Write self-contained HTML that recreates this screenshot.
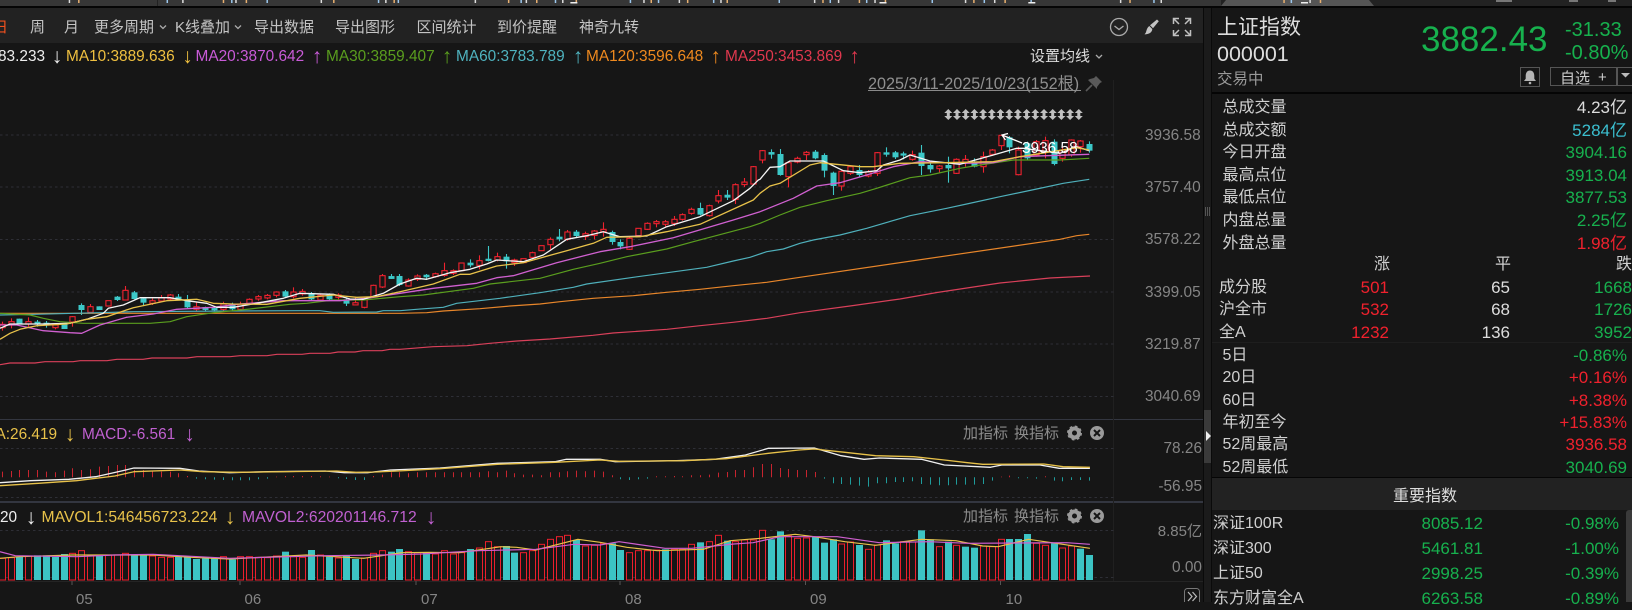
<!DOCTYPE html>
<html lang="zh-CN">
<head>
<meta charset="utf-8">
<title>上证指数</title>
<style>
html,body{margin:0;padding:0;background:#161616}
body{position:relative;width:1632px;height:602px;overflow:hidden;font-family:"Liberation Sans","Noto Sans CJK SC",sans-serif;color:#ccc}
.b{position:absolute}
.t{position:absolute;white-space:nowrap;line-height:20px;height:20px;margin-top:1px}
.tb{font-size:15px;color:#c4c4c4;top:17px}
.ma{font-size:15.4px;top:46px}
.ar{font-size:21px}
.ax{font-size:15.4px;color:#858585}
.ind{font-size:15px;color:#8c8c8c}
.lb{font-size:16px;color:#d0d0d0;left:1222.5px}
.v{font-size:17px;right:5px}
.n{font-size:16px;color:#d0d0d0}
.g{color:#17b14e}.r{color:#f0212d}
svg{position:absolute;left:0;top:0}
</style>
</head>
<body>
<!-- backgrounds -->
<div class="b" style="left:0;top:0;width:1632px;height:7px;background:#222"></div>
<div class="b" style="left:0;top:0;width:1221px;height:6px;background:#363636"></div>
<div class="b" style="left:0;top:6px;width:1632px;height:2px;background:#050505"></div>
<div class="b" style="left:0;top:8px;width:1203px;height:35px;background:#222"></div>
<div class="b" style="left:1203px;top:8px;width:9px;height:594px;background:#1b1b1b;border-left:1px solid #0a0a0a;border-right:1px solid #0a0a0a;box-sizing:border-box"></div>
<div class="b" style="left:1204px;top:410px;width:7px;height:53px;background:#3a3a3a"></div>
<div class="b" style="left:1212px;top:92px;width:420px;height:2px;background:#050505"></div>
<div class="b" style="left:1212px;top:342px;width:420px;height:1px;background:#1e1e1e"></div>
<div class="b" style="left:1212px;top:477px;width:420px;height:1px;background:#050505"></div>
<div class="b" style="left:1212px;top:478px;width:420px;height:32px;background:#222"></div>
<div class="b" style="left:1626px;top:510px;width:6px;height:92px;background:#3a3a3a;border-radius:3px 0 0 0"></div>
<div class="b" style="left:0;top:419px;width:1203px;height:1px;background:#333640"></div>
<div class="b" style="left:0;top:501px;width:1203px;height:2px;background:#333640"></div>
<div class="b" style="left:0;top:581px;width:1203px;height:1px;background:#242424"></div>
<div class="b" style="left:1113px;top:80px;width:1px;height:501px;background:#202020"></div>

<svg id="s" width="1632" height="602" viewBox="0 0 1632 602" xmlns="http://www.w3.org/2000/svg">
  <polygon points="1221,6 1226,0 1369,0 1374,6" fill="#555"/>
  <g id="marks"></g>
  <g stroke="#2e2f36" stroke-dasharray="2.5 3" stroke-width="1">
    <line x1="0" x2="1116" y1="135" y2="135"/><line x1="0" x2="1116" y1="187" y2="187"/>
    <line x1="0" x2="1116" y1="239.5" y2="239.5"/><line x1="0" x2="1116" y1="292" y2="292"/>
    <line x1="0" x2="1116" y1="344" y2="344"/><line x1="0" x2="1116" y1="396.5" y2="396.5"/>
    <line x1="0" x2="1116" y1="448.5" y2="448.5"/><line x1="0" x2="1116" y1="497.5" y2="497.5"/>
    <line x1="0" x2="1116" y1="530.5" y2="530.5"/><line x1="0" x2="1116" y1="577.5" y2="577.5"/>
  </g>
  <g stroke="#555" stroke-width="1">
    <line x1="72" x2="72" y1="581" y2="585"/><line x1="240" x2="240" y1="581" y2="585"/>
    <line x1="416" x2="416" y1="581" y2="585"/><line x1="620" x2="620" y1="581" y2="585"/>
    <line x1="805.5" x2="805.5" y1="581" y2="585"/><line x1="1000.5" x2="1000.5" y1="581" y2="585"/>
  </g>
  <g id="chart"></g>
  <!-- high arrow -->
  <g stroke="#fff" stroke-width="1.3" fill="none">
    <path d="M1002,135 L1022,143"/><path d="M1008,133.5 L1002,135 L1005.5,140"/>
  </g>
  <!-- toolbar chevrons -->
  <g fill="none" stroke="#aaa" stroke-width="1.3">
    <path d="M160,25.5 l3,3 l3,-3"/><path d="M235,25.5 l3,3 l3,-3"/><path d="M1096,55 l3,3 l3,-3"/>
    <circle cx="1119" cy="27" r="8.5" stroke="#aaa"/>
    <path d="M1114.5,26 l4.5,3.5 l4.5,-3.5" stroke="#aaa"/>
  </g>
  <!-- brush -->
  <path d="M1157,19.5 L1158.8,21.3 L1153,28.3 L1150,25.3Z" fill="#c4c4c4"/>
  <path d="M1149.3,26 L1152.3,29 C1152.3,33 1147.5,34.5 1144.5,34.3 C1147,32.5 1145.8,28.5 1149.3,26Z" fill="#c4c4c4"/>
  <!-- fullscreen -->
  <g fill="none" stroke="#c0c0c0" stroke-width="1.5">
    <path d="M1173.5,24 V18.5 H1179 M1174,19 L1179,24"/>
    <path d="M1190.5,24 V18.5 H1185 M1190,19 L1185,24"/>
    <path d="M1173.5,30 V35.5 H1179 M1174,35 L1179,30"/>
    <path d="M1190.5,30 V35.5 H1185 M1190,35 L1185,30"/>
  </g>
  <!-- pin -->
  <polygon points="1096,76 1102,82 1100,83 1097,87 1097,89 1088,80 1090,79 1094,78" fill="#5a5a5a"/>
  <path d="M1086,91 L1092,85" stroke="#5a5a5a" stroke-width="1.6"/>
  <line x1="868" x2="1081" y1="90.5" y2="90.5" stroke="#8a8a8a"/>
  <g id="da" fill="#c0c0c0"></g>
  <!-- gear + close -->
  <g id="ic"></g>
  <!-- right panel icons -->
  <rect x="1520.5" y="67.5" width="19" height="19" fill="none" stroke="#555"/>
  <path d="M1530,70.5 c-3.2,0 -4.3,2.8 -4.3,5.6 v2.6 l-1.7,2.3 h12 l-1.7,-2.3 v-2.6 c0,-2.8 -1.1,-5.6 -4.3,-5.6z" fill="#b5b5b5"/>
  <circle cx="1530" cy="83" r="1.3" fill="#b5b5b5"/>
  <rect x="1550.5" y="67.5" width="66" height="18" fill="none" stroke="#555"/>
  <rect x="1617.5" y="67.5" width="16" height="18" fill="none" stroke="#555"/>
  <polygon points="1621,73 1630,73 1625.5,77.5" fill="#bbb"/>
  <polygon points="1206,431 1206,441 1211,436" fill="#eee"/>
  <g fill="#555"><rect x="1205" y="207" width="1" height="9"/><rect x="1207" y="207" width="1" height="9"/><rect x="1209" y="207" width="1" height="9"/></g>
  <!-- >> -->
  <rect x="1184.5" y="588.5" width="15" height="20" rx="3" fill="#161616" stroke="#777"/>
  <path d="M1188,592 l4,4.5 l-4,4.5 M1192.5,592 l4,4.5 l-4,4.5" fill="none" stroke="#bbb" stroke-width="1.2"/>
</svg>

<!-- toolbar -->
<div class="t tb" style="left:-7px;color:#f0501e">日</div>
<div class="t tb" style="left:30px">周</div>
<div class="t tb" style="left:64px">月</div>
<div class="t tb" style="left:94px">更多周期</div>
<div class="t tb" style="left:175px">K线叠加</div>
<div class="t tb" style="left:254px">导出数据</div>
<div class="t tb" style="left:335px">导出图形</div>
<div class="t tb" style="left:416.5px">区间统计</div>
<div class="t tb" style="left:497px">到价提醒</div>
<div class="t tb" style="left:579px">神奇九转</div>

<!-- MA row -->
<div class="t ma" style="left:-2px;color:#eee">83.233</div>
<div class="t ma ar" style="left:51.75px;color:#eee">↓</div>
<div class="t ma" style="left:66px;color:#efc040">MA10:3889.636</div>
<div class="t ma ar" style="left:182.25px;color:#efc040">↓</div>
<div class="t ma" style="left:195.5px;color:#c95bd8">MA20:3870.642</div>
<div class="t ma ar" style="left:311.75px;color:#c95bd8">↑</div>
<div class="t ma" style="left:326px;color:#5a9e1e">MA30:3859.407</div>
<div class="t ma ar" style="left:441.75px;color:#5a9e1e">↑</div>
<div class="t ma" style="left:456px;color:#4fb3bf">MA60:3783.789</div>
<div class="t ma ar" style="left:572.75px;color:#4fb3bf">↑</div>
<div class="t ma" style="left:586px;color:#ef8a1f">MA120:3596.648</div>
<div class="t ma ar" style="left:710.35px;color:#ef8a1f">↑</div>
<div class="t ma" style="left:725px;color:#e0384e">MA250:3453.869</div>
<div class="t ma ar" style="left:849.25px;color:#e0384e">↑</div>
<div class="t" style="left:1030px;top:46px;font-size:15px;color:#ddd">设置均线</div>
<div class="t" style="left:868px;top:73px;font-size:16.2px;color:#8f8f8f">2025/3/11-2025/10/23(152根)</div>

<!-- axis -->
<div class="t ax" style="left:1145px;top:125px">3936.58</div>
<div class="t ax" style="left:1145px;top:177px">3757.40</div>
<div class="t ax" style="left:1145px;top:229px">3578.22</div>
<div class="t ax" style="left:1145px;top:282px">3399.05</div>
<div class="t ax" style="left:1145px;top:334px">3219.87</div>
<div class="t ax" style="left:1145px;top:386px">3040.69</div>
<div class="t ax" style="right:430px;top:438px">78.26</div>
<div class="t ax" style="right:430px;top:476px">-56.95</div>
<div class="t ax" style="right:430px;top:521px;font-size:15px">8.85亿</div>
<div class="t ax" style="right:430px;top:557px">0.00</div>
<div class="t" style="left:1022px;top:138px;font-size:15.4px;color:#fff">3936.58</div>

<!-- panel headers -->
<div class="t ma" style="left:-4.5px;top:424px;color:#e8c24a">A:26.419</div>
<div class="t ma ar" style="left:64.75px;top:424px;color:#e8c24a">↓</div>
<div class="t ma" style="left:82px;top:424px;color:#c060d0">MACD:-6.561</div>
<div class="t ma ar" style="left:184.25px;top:424px;color:#c060d0">↓</div>
<div class="t ind" style="left:963px;top:423px">加指标</div>
<div class="t ind" style="left:1014px;top:423px">换指标</div>
<div class="t ma" style="left:0;top:507px;color:#eee">20</div>
<div class="t ma ar" style="left:25.75px;top:507px;color:#eee">↓</div>
<div class="t ma" style="left:41.5px;top:507px;color:#e8c24a;font-size:15.7px">MAVOL1:546456723.224</div>
<div class="t ma ar" style="left:224.75px;top:507px;color:#e8c24a">↓</div>
<div class="t ma" style="left:242px;top:507px;color:#c060d0;font-size:15.7px">MAVOL2:620201146.712</div>
<div class="t ma ar" style="left:425.75px;top:507px;color:#c060d0">↓</div>
<div class="t ind" style="left:963px;top:506px">加指标</div>
<div class="t ind" style="left:1014px;top:506px">换指标</div>

<!-- x axis -->
<div class="t ax" style="left:76px;top:589px;font-size:15px">05</div>
<div class="t ax" style="left:244.5px;top:589px;font-size:15px">06</div>
<div class="t ax" style="left:421px;top:589px;font-size:15px">07</div>
<div class="t ax" style="left:625px;top:589px;font-size:15px">08</div>
<div class="t ax" style="left:810px;top:589px;font-size:15px">09</div>
<div class="t ax" style="left:1005.5px;top:589px;font-size:15px">10</div>

<!-- right panel head -->
<div class="t" style="left:1217px;top:17px;font-size:21px;color:#ddd">上证指数</div>
<div class="t" style="left:1217px;top:43px;font-size:21.5px;color:#ddd">000001</div>
<div class="t" style="left:1217px;top:69px;font-size:15.5px;color:#999">交易中</div>
<div class="t g" style="left:1421px;top:29px;font-size:35px;line-height:20px">3882.43</div>
<div class="t g" style="left:1565px;top:19px;font-size:20px">-31.33</div>
<div class="t g" style="left:1565px;top:42px;font-size:20px">-0.80%</div>
<div class="t" style="left:1560px;top:68px;font-size:15px;color:#ccc">自选</div>
<div class="t" style="left:1598px;top:67px;font-size:15px;color:#ccc">+</div>

<!-- stats -->
<div class="t lb" style="top:97px">总成交量</div><div class="t v" style="top:97px;color:#ddd">4.23亿</div>
<div class="t lb" style="top:120px">总成交额</div><div class="t v" style="top:120px;color:#3bbfd0">5284亿</div>
<div class="t lb" style="top:142px">今日开盘</div><div class="t v g" style="top:142px">3904.16</div>
<div class="t lb" style="top:165px">最高点位</div><div class="t v g" style="top:165px">3913.04</div>
<div class="t lb" style="top:187px">最低点位</div><div class="t v g" style="top:187px">3877.53</div>
<div class="t lb" style="top:210px">内盘总量</div><div class="t v g" style="top:210px">2.25亿</div>
<div class="t lb" style="top:233px">外盘总量</div><div class="t v r" style="top:233px">1.98亿</div>

<div class="t n" style="left:1374px;top:254px">涨</div>
<div class="t n" style="left:1495px;top:254px">平</div>
<div class="t n" style="left:1616px;top:254px">跌</div>

<div class="t n" style="left:1219px;top:277px">成分股</div>
<div class="t v r" style="right:243px;top:277px">501</div><div class="t v" style="right:122px;top:277px;color:#ddd">65</div><div class="t v g" style="right:0;top:277px">1668</div>
<div class="t n" style="left:1219px;top:299px">沪全市</div>
<div class="t v r" style="right:243px;top:299px">532</div><div class="t v" style="right:122px;top:299px;color:#ddd">68</div><div class="t v g" style="right:0;top:299px">1726</div>
<div class="t n" style="left:1219px;top:322px">全A</div>
<div class="t v r" style="right:243px;top:322px">1232</div><div class="t v" style="right:122px;top:322px;color:#ddd">136</div><div class="t v g" style="right:0;top:322px">3952</div>

<div class="t lb" style="top:345px">5日</div><div class="t v g" style="top:345px">-0.86%</div>
<div class="t lb" style="top:367px">20日</div><div class="t v r" style="top:367px">+0.16%</div>
<div class="t lb" style="top:390px">60日</div><div class="t v r" style="top:390px">+8.38%</div>
<div class="t lb" style="top:412px">年初至今</div><div class="t v r" style="top:412px">+15.83%</div>
<div class="t lb" style="top:434px">52周最高</div><div class="t v r" style="top:434px">3936.58</div>
<div class="t lb" style="top:457px">52周最低</div><div class="t v g" style="top:457px">3040.69</div>

<div class="t" style="left:1393px;top:486px;font-size:16px;color:#ddd">重要指数</div>

<div class="t n" style="left:1213px;top:513px">深证100R</div><div class="t v g" style="left:1421.5px;right:auto;top:513px">8085.12</div><div class="t v g" style="right:13px;top:513px">-0.98%</div>
<div class="t n" style="left:1213px;top:538px">深证300</div><div class="t v g" style="left:1421.5px;right:auto;top:538px">5461.81</div><div class="t v g" style="right:13px;top:538px">-1.00%</div>
<div class="t n" style="left:1213px;top:563px">上证50</div><div class="t v g" style="left:1421.5px;right:auto;top:563px">2998.25</div><div class="t v g" style="right:13px;top:563px">-0.39%</div>
<div class="t n" style="left:1213px;top:588px">东方财富全A</div><div class="t v g" style="left:1421.5px;right:auto;top:588px">6263.58</div><div class="t v g" style="right:13px;top:588px">-0.89%</div>

<script>
(function(){
var NS='http://www.w3.org/2000/svg';
function el(par,n,a){var e=document.createElementNS(NS,n);for(var k in a)e.setAttribute(k,a[k]);par.appendChild(e);return e;}
var ch=document.getElementById('chart');
function X(i){return 1089-(123-i)*8.84;}

/* top strip marks */
var mk=document.getElementById('marks');
[66,75,160,175,214,222,226,236,256,308,320,363,370,378,382,456,488,500,505,515,533,540,553,605,618,625,632,652,660,685,692,698,748,782,790,797,805,825,832,840,850,895,927,935,945,955,965,990,1076,1085,1108,1115,1233,1240,1258,1268].forEach(function(v,i){
  el(mk,'rect',{x:v*1.0408,y:0,width:1.5,height:3,fill:['#ddd','#e8b070','#9cc8ee'][i%3]});
});
[548,845,988,1250].forEach(function(v){el(mk,'rect',{x:v*1.0408,y:2,width:7,height:1.5,fill:'#eee'});});
el(mk,'rect',{x:157,y:0,width:1,height:6,fill:'#222'});
[[1496,16],[1569,9],[1608,8]].forEach(function(a){el(mk,'rect',{x:a[0],y:0,width:a[1],height:2,fill:'#777'});});

/* double arrows */
var da=document.getElementById('da');
for(var i=0;i<16;i++){var x=948.3+i*8.7;
  el(da,'path',{d:'M'+x+',109 l4,4 h-2.5 v3 h2.5 l-4,4 l-4,-4 h2.5 v-3 h-2.5z'});}

/* icons */
var ic=document.getElementById('ic');
[433,516].forEach(function(y){
  el(ic,'circle',{cx:1074.5,cy:y,r:4.5,fill:'none',stroke:'#9a9a9a','stroke-width':4});
  el(ic,'circle',{cx:1074.5,cy:y,r:6.6,fill:'none',stroke:'#9a9a9a','stroke-width':1.8,'stroke-dasharray':'2.6 2.6'});
  el(ic,'circle',{cx:1097,cy:y,r:7,fill:'#9a9a9a'});
  el(ic,'path',{d:'M1094,'+(y-3)+' l6,6 m0,-6 l-6,6',stroke:'#161616','stroke-width':2,fill:'none'});
});

/* candles */
var GR='#3cc8c8',RD='#f0222f';
var C=[
[260,"R 193 203 185 212,R 185 195 175 205,G 176 192 176 192,R 185 192 172 200,G 185 192 180 200,G 188 195 183 203,R 195 203 190 208,G 193 207 193 207,R 170 186 168 200,G 135 150 130 165,R 140 157 132 160,G 139 150 139 150,R 122 138 122 138,G 110 120 108 123,R 91 120 78 120,G 97 117 93 118,G 115 128 113 135,R 124 128 115 135,R 113 123 105 125,R 105 117 102 120,G 110 118 102 120,G 120 142 105 144,R 142 146 125 155,G 143 148 140 155,G 146 149 140 155,R 132 148 125 152,G 135 148 128 152,R 132 148 125 150,R 118 132 115 135,R 110 117 105 122,R 108 112 102 118,R 96 106 94 112,G 94 110 90 112,R 96 110 82 115,R 96 100 87 107,G 100 118 96 120,R 106 120 102 122,G 103 118 100 122,R 105 112 100 118,G 118 131 112 138,R 130 133 112 134,R 115 142 112 145,R 76 110 74 112,R 47 81 42 84,G 50 55 42 57,G 48 75 42 78"],
[180,"R 300 318 295 320,R 288 298 283 303,G 286 290 282 297,R 283 288 278 293,R 272 286 248 290,R 272 280 268 285,R 249 272 249 272,G 248 256 238 262,R 242 256 226 268,G 238 241 198 244,R 230 240 218 244,G 230 244 222 266,R 240 248 236 258,R 236 248 236 248,R 218 232 215 235,R 197 212 197 212,R 178 194 172 208,G 170 178 147 184,R 156 178 150 182,G 155 168 150 172,R 163 168 155 180,R 153 166 150 178,R 148 155 127 170,G 156 186 152 194,G 186 199 178 208,R 175 208 172 210,R 145 167 145 167,R 130 148 127 150,R 125 131 120 142,R 127 131 120 140,R 118 130 108 138,R 104 118 100 122,R 88 100 83 104,G 84 104 68 106,R 77 107 74 110,R 47 63 30 70,G 46 51 30 60,R 14 58 10 72,R 8 12 -6 21,R -40 12 -42 12"],
[100,"R 152 180 150 190,G 158 162 148 176,G 162 225 147 227,R 188 230 185 262,R 175 186 170 190,R 157 164 153 180,G 155 175 150 178,G 165 212 160 232,G 218 258 215 285,R 214 258 210 272,R 200 220 196 225,G 210 225 195 232,R 216 228 210 232,R 158 220 156 228,G 157 164 142 170,G 157 172 153 177,G 162 165 155 178,R 164 178 152 182,G 158 198 135 225,G 195 208 190 218,R 198 206 195 218,G 195 205 170 248,R 178 220 175 222,R 180 185 165 200,G 185 200 175 202,R 170 200 155 218,R 150 163 147 168,R 106 137 105 150,G 112 142 108 160,R 150 224 140 226,G 130 175 125 180,R 125 165 120 170,R 122 155 110 175,G 125 192 118 196,R 150 175 140 185,R 120 165 118 170,R 123 140 120 158,G 132 152 124 158"]
];
var idx=0;
C.forEach(function(g){
  g[1].split(',').forEach(function(s){
    var p=s.split(' '),c=p[0]=='R'?RD:GR,x=Math.round(X(idx))+.5,
        T=g[0]+(+p[1])/3,B=g[0]+(+p[2])/3,a=g[0]+(+p[3])/3,b=g[0]+(+p[4])/3;
    el(ch,'line',{x1:x,x2:x,y1:a,y2:b,stroke:c,'stroke-width':1.1});
    if(B-T<2){T-=.6;B+=.6;}
    if(p[0]=='R') el(ch,'rect',{x:x-2.6,y:T,width:5.2,height:B-T,fill:'#161616',stroke:c,'stroke-width':1.1});
    else el(ch,'rect',{x:x-3,y:T,width:6,height:B-T,fill:c});
    idx++;
  });
});

/* lines */
var Z={a:[0,260,3,3],b:[400,180,3,3],c:[760,100,3,3],m:[0,420,2.613,3],n:[600,420,2.613,3],r:[0,0,1,1]};
function L(col,w,segs){
  var pts=[];
  segs.forEach(function(sg){var z=Z[sg[0]];
    sg[1].split(' ').forEach(function(q){var v=q.split(',');
      pts.push((z[0]+v[0]/z[2]).toFixed(1)+','+(z[1]+v[1]/z[3]).toFixed(1));});});
  el(ch,'polyline',{points:pts.join(' '),fill:'none',stroke:col,'stroke-width':w,'stroke-linejoin':'round'});
}
L('#d9405a',1.2,[['r','0,364.7 10,363 35,363 45,361.7 73,361.7 80,360.7 107,360.7 117,359.3 143,359.3 152,358 187,358 197,356.7 230,356.7 240,355.7 267,355.7 277,354.3 302,354.3 310,353.3 330,353.3 338,352 355,352 363,350.7 382,350.7 390,349.3 400,349.3 433,346.7 467,345.7 490,343.3 517,341 550,339 593,335.3 613,333 667,329.3 700,325.7 733,322.3 767,318.3 800,312.7 850,306 900,299 937,292.5 1000,283 1050,278 1090,276']]);
L('#e8862a',1.2,[['a','0,160 1200,160'],['b','80,398 130,393 240,386 330,378 420,372 480,365 580,355 700,347 800,337 900,328 1000,317 1100,307 1200,292'],['c','900,418 950,407 988,403']]);
L('#4fb0bb',1.2,[['a','0,165 100,163 300,158 400,155 700,153 900,152 960,152 1000,157 1130,156 1150,152 1200,152'],['b','50,388 130,382 170,370 300,355 420,338 520,322 560,312 700,292 920,262 1000,243 1050,232 1100,215 1150,207 1200,190'],['c','160,420 240,405 320,385 450,347 560,325 620,312 720,290 830,267 910,250 988,238']]);
L('#5a9e1e',1.2,[['a','0,160 90,165 130,175 180,185 250,190 450,190 510,185 560,170 640,158 750,147 870,133 920,130 1000,120 1090,120 1200,110'],['b','70,345 220,325 270,312 420,295 520,268 600,250 680,230 800,207 880,185 1050,140'],['c','0,370 60,345 120,322 200,302 300,280 350,265 450,233 510,225 600,205 660,195 760,180 900,180 988,175']]);
L('#d060d0',1.3,[['a','0,195 50,195 130,212 210,218 245,220 300,195 380,172 460,162 530,148 640,142 720,132 850,122 1020,122 1100,115 1200,100'],['b','100,325 230,310 290,293 340,287 470,248 600,215 690,200 820,173 1000,120'],['c','0,335 100,295 170,258 240,248 330,222 400,200 480,185 600,190 700,188 780,170 860,167 988,163']]);
L('#f5f5f5',1.3,[['a','0,205 30,192 130,192 210,190 260,178 310,160 325,145 370,135 420,113 510,113 560,122 620,130 650,142 700,142 770,130 850,115 900,100 1000,103 1050,117 1090,118 1150,100 1200,72'],['b','50,295 80,298 150,278 210,268 260,252 290,240 370,245 430,225 500,178 560,167 610,155 660,170 740,168 800,140 900,110 1000,62 1050,25 1075,0'],['c','0,238 30,202 60,200 90,183 190,183 250,212 300,218 350,212 370,195 420,180 450,165 510,183 600,193 700,165 770,145 790,145 900,160 950,140 988,152']]);
L('#e8c24a',1.3,[['a','0,238 30,220 60,208 110,197 200,192 260,178 320,170 400,143 500,122 590,118 640,130 700,132 800,133 900,115 1000,105 1070,112 1130,110 1200,95'],['b','100,312 180,283 210,283 290,258 370,248 500,212 580,190 620,172 720,170 800,155 900,133 1060,60'],['c','0,280 30,258 60,250 150,195 180,188 300,200 340,200 420,190 550,188 700,185 780,170 950,143 988,150']]);

/* MACD bars */
var M=[17,19,22,22,22,17,15,20,27,22,24,32,34,37,37,22,22,20,17,17,12,4,-4,-6,-7,-8,-9,-9,-9,-6,-4,2,4,4,4,4,3,2,-3,-5,-8,-8,4,8,15,15,12,15,15,15,15,15,15,15,15,18,15,20,12,8,8,6,15,15,18,20,18,20,
17,6,-6,-8,-6,-4,3,3,4,3,6,6,8,14,16,22,22,30,40,40,28,25,22,22,16,-4,-18,-20,-22,-25,-28,-18,-18,-14,-14,-12,-20,-22,-24,-24,-22,-22,-22,-20,-10,2,5,-3,-3,-4,3,-10,-12,-8,-8,-10];
M.forEach(function(v,i){var x=Math.round(X(i))+.5,y=477.3;
  el(ch,'line',{x1:x,x2:x,y1:y,y2:y-v/3,stroke:v>0?'#c8242f':'#1f9c9c','stroke-width':1});});
L('#f0f0f0',1.3,[['m','0,188 80,182 180,178 250,170 320,152 350,144 470,145 520,153 600,158 700,155 850,153 900,158 960,158 1020,150 1150,144 1300,130 1450,125 1480,118 1568,118'],['n','40,125 200,122 300,118 380,105 440,85 560,84 630,107 690,118 730,114 840,118 900,135 1020,142 1050,135 1150,135 1200,145 1280,145']]);
L('#e8c24a',1.3,[['m','0,197 100,190 200,182 300,168 350,155 470,150 530,155 620,157 880,153 930,157 980,156 1040,153 1150,146 1300,133 1450,127 1568,120'],['n','50,124 220,122 330,116 440,100 520,90 560,87 640,97 720,107 820,110 900,120 960,128 1000,133 1160,132 1210,140 1280,142']]);

/* volume */
var V="R415 R413 G411 R408 G406 G406 G411 G402 R400 R392 R408 G408 R405 R405 R400 G405 G405 R408 R412 R412 G410 G410 G417 G415 G415 R410 G418 R410 R410 R412 R413 R408 G395 R410 R412 G390 R405 G410 R414 G408 G417 R414 R400 R392 G395 G387 R395 R398 G398 R402 R392 R402 R398 G387 R384 R365 R380 G378 G398 R398 R392 R373 R358 R350 R346 G360 R378 R376 R370 G370 G390 R398 R392 R392 R390 G388 R388 R388 R373 G367 R365 R346 G362 R365 R360 R360 R331 G358 G334 R348 R355 R354 G350 G368 G358 R372 R366 G375 R388 R375 G361 G370 R365 R366 G331 G358 R380 G365 R376 G380 G383 R378 R380 R358 G357 G357 G342 R370 R376 G370 R384 R378 G386 G405".split(' ');
V.forEach(function(s,i){var x=Math.round(X(i))+.5,t=420+(+s.slice(1))/3;
  if(s[0]=='R') el(ch,'rect',{x:x-3,y:t,width:6,height:580-t,fill:'#161616',stroke:'#ec1f2c','stroke-width':1});
  else el(ch,'rect',{x:x-3.5,y:t,width:7,height:580-t,fill:'#3cc4c4'});
});
L('#e8c24a',1.2,[['m','0,415 50,410 190,405 400,405 500,412 600,417 800,405 950,415 1050,398 1120,397 1200,398 1310,380 1350,382 1400,390 1510,358 1568,367'],['n','70,382 150,392 270,388 340,362 420,355 510,343 560,350 640,365 720,376 840,358 930,362 1000,378 1040,380 1120,358 1280,385']]);
L('#cf5fd0',1.2,[['m','0,395 40,407 200,410 300,405 400,403 600,415 850,407 1000,405 1100,402 1250,392 1400,388 1500,373 1568,375'],['n','50,365 170,385 240,385 350,372 400,368 470,350 620,350 730,368 860,365 960,370 1220,368 1280,373']]);
})();
</script>
</body>
</html>
